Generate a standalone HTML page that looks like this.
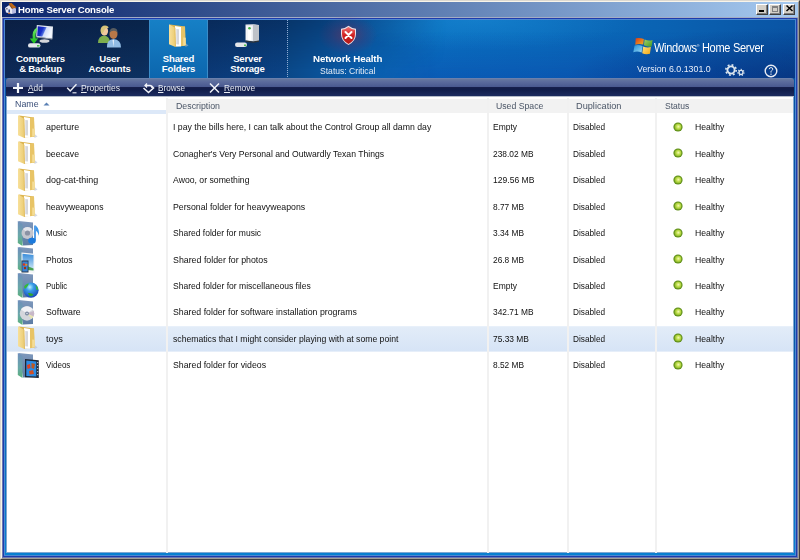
<!DOCTYPE html>
<html><head><meta charset="utf-8"><style>
*{margin:0;padding:0;box-sizing:border-box}
html,body{width:800px;height:560px;overflow:hidden;background:#D4D0C8;font-family:"Liberation Sans",sans-serif}
.a{position:absolute}
#frame{left:0;top:0;width:800px;height:560px;border-top:1px solid #DCD8D0;border-left:1px solid #DCD8D0;border-right:1px solid #404040;border-bottom:1px solid #404040}
#frame2{left:1px;top:1px;width:798px;height:558px;border-top:1px solid #F8F4EA;border-left:1px solid #F8F4EA;border-right:1px solid #A09C94;border-bottom:1px solid #A09C94}
#title{left:2px;top:2px;width:796px;height:15px;background:linear-gradient(to right,#0A246A,#A6CAF0)}
#ttext{left:18px;top:4.5px;color:#fff;font-weight:bold;font-size:10px;letter-spacing:-0.3px;white-space:nowrap}
.tb{top:4px;width:12px;height:11px;background:#D4D0C8;border-top:1px solid #fff;border-left:1px solid #fff;border-right:1px solid #404040;border-bottom:1px solid #404040;box-shadow:inset -1px -1px 0 #808080}
#titlegap{left:2px;top:17px;width:796px;height:1px;background:#A4ACC4}
#mix{left:2px;top:18px;width:796px;height:540px;background:#6A78B0}
#border{left:3px;top:18px;width:794px;height:539px;background:#1E3CAC}
#border2{left:4px;top:19px;width:792px;height:537px;background:#4C88D0}
#border3{left:5px;top:20px;width:790px;height:535px;background:linear-gradient(to bottom,#0850A0,#0858A8 60%,#0880D0)}
#cedge{left:6px;top:97px;width:788px;height:456px;background:#7EA6D2}
#header{left:5px;top:20px;width:282px;height:58px;background:linear-gradient(to bottom,rgba(0,0,12,.27),rgba(0,0,0,0)),linear-gradient(to right,#0E2A58 0,#0C3060 135px,#0B3A78 205px,#0A4488 282px)}
#headerR{left:287px;top:20px;width:508px;height:58px;background:radial-gradient(ellipse 230px 55px at 508px 62px,rgba(0,10,70,.38),rgba(0,0,0,0)),radial-gradient(ellipse 160px 30px at 190px 0px,rgba(40,160,230,.30),rgba(0,0,0,0)),linear-gradient(to right,#0A4888 0,#0A5CAA 70px,#0A70C0 150px,#0A6CBC 250px,#0A62B2 380px,#0A54A4 508px)}
#hrTop{left:287px;top:20px;width:160px;height:58px;background:linear-gradient(to bottom,rgba(0,0,20,.25),rgba(0,0,0,0) 85%);-webkit-mask-image:linear-gradient(to right,#000 0,#000 40px,rgba(0,0,0,0) 160px)}
#hrBot{left:370px;top:20px;width:425px;height:58px;background:linear-gradient(to bottom,rgba(10,30,150,0) 20%,rgba(10,30,150,.25));-webkit-mask-image:linear-gradient(to right,rgba(0,0,0,0) 0,#000 60px,#000 300px,rgba(0,0,0,.3) 425px)}
#sel{left:149px;top:20px;width:59px;height:58px;background:linear-gradient(to bottom,#1680C6,#0C66AE);border-left:1px solid #3A8CC8;border-right:1px solid #3A8CC8}
#sep{left:287px;top:20px;width:1px;height:58px;background:repeating-linear-gradient(to bottom,#90ACD4 0 1px,rgba(0,0,0,0) 1px 2px)}
.tab{top:53.6px;width:69px;color:#fff;font-weight:bold;font-size:9.6px;letter-spacing:-0.2px;line-height:10px;text-align:center;white-space:nowrap}
#toolbar{left:6px;top:78px;width:788px;height:18px;border-radius:3px 3px 0 0;background:linear-gradient(to bottom,#7088B8 0px,#66789F 1px,#5A6A9C 4px,#4A5A90 8.5px,#161F4C 9.5px,#101C48 11px,#1C2C60 18px)}
#tbline{left:6px;top:96px;width:788px;height:1px;background:#B4BCC8}
.tbi{top:82px;color:#E8ECF4;font-size:9.3px;letter-spacing:-0.3px;white-space:nowrap}
#content{left:7px;top:97px;width:786px;height:455px;background:#fff}
.hcell{top:98.6px;height:14.6px;background:#F2F2F2}
.htext{top:101px;color:#4A5566;font-size:9.3px;letter-spacing:-0.25px;white-space:nowrap}
.vdiv{top:98px;width:2px;height:455px;background:#F1F1F1}
.cell{color:#101010;font-size:9.3px;letter-spacing:-0.25px;white-space:nowrap}
</style></head><body>
<div class="a" id="frame"></div><div class="a" id="frame2"></div>
<div class="a" id="title"></div>
<div class="a" id="ttl" style="left:18.00px;top:3.10px;line-height:14px;font-size:9.8px;font-weight:bold;letter-spacing:-0.2px;color:#fff;white-space:nowrap;transform:scaleX(0.9817);transform-origin:0 0;">Home Server Console</div>
<div class="a tb" style="left:756px"></div>
<div class="a tb" style="left:769px"></div>
<div class="a tb" style="left:783px"></div>
<svg class="a" style="left:4px;top:3px" width="13" height="12" viewBox="0 0 13 12">
<path d="M1 5 L6 1.5 L8 4 L8 11 L2 9.5 Z" fill="#E8E8F4"/>
<path d="M8 4 L12 5.5 L12 10 L8 11 Z" fill="#B8BCE0"/>
<path d="M4.5 0.5 L7.5 0 L12.5 4.5 L9 5.5 Z" fill="#C06A18"/>
<path d="M6 1.5 L9 5.5 L8 6 L5 2 Z" fill="#8A4810"/>
<rect x="4.5" y="6.5" width="1.4" height="3" fill="#1A3A8A"/>
<rect x="2.3" y="5.2" width="1.2" height="1.2" fill="#303040"/>
<rect x="4.2" y="9.8" width="1.6" height="1.2" fill="#D07020"/>
</svg>
<div class="a" style="left:759px;top:9.5px;width:5px;height:2px;background:#000"></div>
<div class="a" style="left:772px;top:6px;width:6px;height:6px;border:1px solid #808080;border-top-width:2px"></div>
<svg class="a" style="left:785px;top:4px" width="9" height="8" viewBox="0 0 9 8"><path d="M1.5 1.5 L7.5 7 M7.5 1.5 L1.5 7" stroke="#000" stroke-width="1.5"/></svg>
<div class="a" id="titlegap"></div><div class="a" id="mix"></div><div class="a" id="border"></div><div class="a" id="border2"></div><div class="a" id="border3"></div>
<div class="a" id="header"></div><div class="a" id="headerR"></div><div class="a" id="hrTop"></div><div class="a" id="hrBot"></div><div class="a" id="sel"></div><div class="a" id="sep"></div>
<div class="a tab" style="left:6px">Computers<br>&amp; Backup</div>
<div class="a tab" style="left:75px">User<br>Accounts</div>
<div class="a tab" style="left:144px">Shared<br>Folders</div>
<div class="a tab" style="left:213px">Server<br>Storage</div>
<div class="a" id="nh" style="left:313.00px;top:52.17px;line-height:14px;font-size:9.6px;font-weight:bold;letter-spacing:-0.1px;color:#fff;white-space:nowrap;transform:scaleX(1.0125);transform-origin:0 0;">Network Health</div>
<div class="a" id="nhs" style="left:320.45px;top:64.10px;line-height:14px;font-size:9.8px;letter-spacing:0px;color:#E4ECF6;white-space:nowrap;transform:scaleX(0.8763);transform-origin:0 0;">Status: Critical</div>
<div class="a" id="whs" style="left:654.22px;top:39.14px;line-height:14px;font-size:12px;letter-spacing:-0.3px;color:#fff;white-space:nowrap;transform:scaleX(0.9167);transform-origin:0 0;">Windows<span style="font-size:4px;vertical-align:5px">&#174;</span> Home Server</div>
<div class="a" id="ver" style="left:637.00px;top:62.10px;line-height:14px;font-size:9.8px;letter-spacing:0px;color:#E8EEF8;white-space:nowrap;transform:scaleX(0.9024);transform-origin:0 0;">Version 6.0.1301.0</div>
<svg class="a" style="left:27px;top:24px" width="28" height="25" viewBox="0 0 28 25">
<defs><linearGradient id="scr" x1="0" y1="0" x2="1" y2=".35"><stop offset="0" stop-color="#0A18B0"/><stop offset=".4" stop-color="#1830C8"/><stop offset=".55" stop-color="#5070E0"/><stop offset=".62" stop-color="#D0DCFA"/><stop offset="1" stop-color="#F4F8FF"/></linearGradient>
<linearGradient id="grn" x1="0" y1="0" x2="0" y2="1"><stop offset="0" stop-color="#70E868"/><stop offset="1" stop-color="#18B818"/></linearGradient></defs>
<path d="M9.8 1 L26 2.6 L25.4 14.8 L9.2 12.8 Z" fill="#E4E8EE"/>
<path d="M10.8 2.3 L25 3.7 L24.5 13.7 L10.2 11.9 Z" fill="url(#scr)"/>
<path d="M9.2 12.8 L25.4 14.8 L25.2 15.6 L9.6 13.6 Z" fill="#A8ACB4"/>
<ellipse cx="17.5" cy="17" rx="5" ry="1.8" fill="#D4D6DA"/>
<path d="M10 3.5 Q4.5 6.5 5.8 14.5 L2.8 14.5 L7 20 L11.2 14.2 L8.6 14.4 Q8 9 10.2 6 Z" fill="url(#grn)"/>
<rect x="1" y="19.2" width="12.5" height="4.4" rx="2.2" fill="#E6E8EC"/>
<rect x="10" y="21" width="2.5" height="1.6" fill="#50C050"/>
</svg>
<svg class="a" style="left:96px;top:24px" width="28" height="25" viewBox="0 0 28 25">
<path d="M2 19 Q2 12 8 11.5 Q14 12 14 19 Z" fill="#7EAE4E"/>
<ellipse cx="8.5" cy="7" rx="3.6" ry="4.6" fill="#F0C8A0"/>
<path d="M4.5 6 Q5 1.5 9 1.5 Q12.5 1.8 12.5 4 Q10 3.5 9 5 Q8 8 5.5 10 Q4.5 8 4.5 6 Z" fill="#D8C47A"/>
<path d="M11 23.5 Q10.5 15.5 17.5 15 Q25 15.5 25 23.5 Z" fill="#92BCE4"/>
<path d="M16.5 16 L18 16 L17.5 23 Z" fill="#E8F0F8"/>
<ellipse cx="17.5" cy="10" rx="4" ry="5" fill="#B87848"/>
<path d="M13.5 9 Q13.5 4 17.8 4 Q21.8 4.2 21.5 9 Q20.5 6.5 17.5 6.8 Q15 6.8 13.5 9 Z" fill="#585C60"/>
</svg>
<svg class="a" style="left:168px;top:24px" width="22" height="25" viewBox="0 0 22 25">
<defs><linearGradient id="fyhdr" x1="0" y1="0" x2="1" y2="0"><stop offset="0" stop-color="#F8E09A"/><stop offset="1" stop-color="#EACB72"/></linearGradient></defs>
<path d="M17 18.5 L20.5 21.5 L17.5 23 Z" fill="#B0B8CC" opacity=".55"/>
<path d="M2 0.5 L17 2.5 L17.5 21.5 L7 22.5 Z" fill="#DDB550"/>
<path d="M7 2 L13 3 L13 22.5 L7.5 22.5 Z" fill="#FFFFFF"/>
<path d="M8.3 5 L11 5.3 L11 20.5 L8.3 20.3 Z" fill="#B4B6C0" opacity=".55"/>
<path d="M13 2.8 L17 2.5 L17.5 21.5 L13 22.3 Z" fill="#E8C466"/>
<path d="M15.2 13.5 L17.8 13.8 L17.8 21 L15.2 21.8 Z" fill="#F4DC96"/>
<path d="M1 0.3 L7 3.8 L7.5 23 L1 20.3 Z" fill="url(#fyhdr)"/>
<path d="M7 3.8 L7.5 23" stroke="#D8AE48" stroke-width=".6"/>
</svg>
<svg class="a" style="left:234px;top:24px" width="27" height="24" viewBox="0 0 27 24">
<path d="M11.5 0.5 L19 0.2 L25 1 L25 16.5 L19 17.5 L11.5 16.5 Z" fill="#E4E6EA"/>
<path d="M19 0.8 L25 1.2 L25 16.5 L19 17.5 Z" fill="#BEC2C8"/>
<path d="M12 2 L18.5 1.8 L18.5 16.5 L12 15.8 Z" fill="#F4F6F8"/>
<rect x="14" y="4" width="3" height="12" fill="#FFFFFF"/>
<circle cx="15.5" cy="4.3" r="1.3" fill="#40B040"/>
<path d="M11.5 16.5 L19 17.5 L25 16.5 L25 17.8 L19 18.8 L11.5 17.8 Z" fill="#303438"/>
<rect x="1" y="18.5" width="12" height="4.5" rx="2.2" fill="#E4E6EA"/>
<rect x="10" y="20.5" width="2.2" height="1.6" fill="#50C050"/>
</svg>
<div class="a" style="left:318px;top:15px;width:60px;height:40px;background:radial-gradient(ellipse at center,rgba(150,40,70,.45) 0,rgba(120,40,90,.2) 40%,rgba(0,0,0,0) 70%)"></div>
<svg class="a" style="left:340px;top:25px" width="17" height="21" viewBox="0 0 17 21">
<defs><linearGradient id="shr" x1="0" y1="0" x2="0" y2="1"><stop offset="0" stop-color="#F07070"/><stop offset=".5" stop-color="#D02020"/><stop offset="1" stop-color="#B01818"/></linearGradient></defs>
<path d="M8.5 0.8 Q12 3.5 16 3.8 L16 9 Q16 16 8.5 20 Q1 16 1 9 L1 3.8 Q5 3.5 8.5 0.8 Z" fill="#E8E0E8"/>
<path d="M8.5 2 Q11.8 4.5 15 4.8 L15 9 Q15 15.5 8.5 19 Q2 15.5 2 9 L2 4.8 Q5.2 4.5 8.5 2 Z" fill="url(#shr)"/>
<path d="M5.5 7 L11.5 13 M11.5 7 L5.5 13" stroke="#FFFFFF" stroke-width="2" stroke-linecap="round"/>
</svg>
<svg class="a" style="left:633px;top:37px" width="21" height="18" viewBox="0 0 21 18">
<defs><linearGradient id="wfr" x1="0" y1="0" x2="1" y2="1"><stop offset="0" stop-color="#D83A18"/><stop offset="1" stop-color="#F4B020"/></linearGradient>
<linearGradient id="wfg" x1="0" y1="0" x2="1" y2="1"><stop offset="0" stop-color="#A8D060"/><stop offset="1" stop-color="#3C9A28"/></linearGradient>
<linearGradient id="wfb" x1="0" y1="0" x2="1" y2="1"><stop offset="0" stop-color="#2090D8"/><stop offset="1" stop-color="#9AD8F4"/></linearGradient>
<linearGradient id="wfy" x1="0" y1="0" x2="1" y2="1"><stop offset="0" stop-color="#FCE080"/><stop offset="1" stop-color="#F4A810"/></linearGradient></defs>
<path d="M2.7 1.3 Q6.5 0.3 10.9 2.1 L10.2 7.5 Q6 6.2 2.3 7.7 Z" fill="url(#wfr)"/>
<path d="M11.6 2.6 Q15.5 4.2 19.6 3 L18.6 9.4 Q14.8 10.2 10.9 8.3 Z" fill="url(#wfg)"/>
<path d="M1.6 8.4 Q5.5 7.2 9.6 9 L8.6 15.5 Q4.5 13.8 0.3 15.2 Z" fill="url(#wfb)"/>
<path d="M10.2 9.5 Q14 11.2 17.9 10.1 L16.9 16.8 Q12.8 17.8 9.2 16.3 Z" fill="url(#wfy)"/>
</svg>
<svg class="a" style="left:723px;top:62px" width="24" height="16" viewBox="0 0 24 16">
<g fill="none" stroke="#DCE6EE">
<circle cx="8" cy="8" r="3.6" stroke-width="1.9"/>
<circle cx="8" cy="8" r="5.2" stroke-width="1.6" stroke-dasharray="1.9 2.18"/>
<circle cx="18" cy="10.4" r="2" stroke-width="1.4"/>
<circle cx="18" cy="10.4" r="3.1" stroke-width="1.1" stroke-dasharray="1.2 1.58"/>
</g></svg>
<svg class="a" style="left:764px;top:64px" width="14" height="14" viewBox="0 0 14 14">
<circle cx="7" cy="7" r="5.8" fill="none" stroke="#E8ECF4" stroke-width="1.4"/>
<path d="M5.2 5.2 Q5.2 3.6 7 3.6 Q8.8 3.6 8.8 5.1 Q8.8 6.2 7.4 6.9 L7 7.5 L7 8.6" fill="none" stroke="#E8ECF4" stroke-width="1"/>
<rect x="6.4" y="9.6" width="1.2" height="1.2" fill="#E8ECF4"/>
</svg>
<div class="a" id="toolbar"></div><div class="a" id="tbline"></div>
<svg class="a" style="left:12px;top:82px" width="12" height="12" viewBox="0 0 12 12"><path d="M6 1 L6 11 M1 6 L11 6" stroke="#F4F6FA" stroke-width="2.2"/></svg>
<svg class="a" style="left:66px;top:83px" width="12" height="11" viewBox="0 0 12 11"><path d="M1.2 4.8 L4.2 8 L10.5 1.2" fill="none" stroke="#F0F2F8" stroke-width="1.4"/><path d="M6.5 9.8 L10.5 9.8" stroke="#F0F2F8" stroke-width="1.1"/></svg>
<svg class="a" style="left:142px;top:82px" width="13" height="12" viewBox="0 0 13 12"><path d="M1.5 6 L6.5 10.5 L11.5 6 L9.5 4" fill="none" stroke="#F0F2F8" stroke-width="1.6"/><path d="M5 1.5 L3 3.5 L5 5.5 M3 3.5 L8 3.5 Q10 3.5 10 6" fill="none" stroke="#F0F2F8" stroke-width="1.3"/></svg>
<svg class="a" style="left:209px;top:82px" width="11" height="12" viewBox="0 0 11 12"><path d="M1 1.5 L10 10.5 M10 1.5 L1 10.5" stroke="#F0F2F8" stroke-width="1.5"/></svg>
<div class="a" id="tb1" style="left:28.00px;top:81.24px;line-height:14px;font-size:9.4px;letter-spacing:0px;color:#E8ECF4;white-space:nowrap;transform:scaleX(0.8824);transform-origin:0 0;"><u>A</u>dd</div>
<div class="a" id="tb2" style="left:81.10px;top:81.24px;line-height:14px;font-size:9.4px;letter-spacing:0px;color:#E8ECF4;white-space:nowrap;transform:scaleX(0.9122);transform-origin:0 0;"><u>P</u>roperties</div>
<div class="a" id="tb3" style="left:158.00px;top:81.24px;line-height:14px;font-size:9.4px;letter-spacing:0px;color:#E8ECF4;white-space:nowrap;transform:scaleX(0.8682);transform-origin:0 0;"><u>B</u>rowse</div>
<div class="a" id="tb4" style="left:223.93px;top:81.24px;line-height:14px;font-size:9.4px;letter-spacing:0px;color:#E8ECF4;white-space:nowrap;transform:scaleX(0.8898);transform-origin:0 0;"><u>R</u>emove</div>
<div class="a" id="cedge"></div><div class="a" id="content"></div>
<div class="a" style="left:7px;top:97px;width:160px;height:13px;background:#fff"></div>
<div class="a" style="left:7px;top:110px;width:160px;height:4px;background:#DCE8F8"></div>
<div class="a hcell" style="left:168px;width:625px"></div>
<div class="a" style="left:7px;top:326px;width:786px;height:26px;background:linear-gradient(to bottom,#E2ECF8,#D6E4F6);border-top:1px solid #E8F0FA;border-bottom:1px solid #E6EEF9"></div>
<div class="a vdiv" style="left:166px"></div>
<div class="a vdiv" style="left:487px"></div>
<div class="a vdiv" style="left:567px"></div>
<div class="a vdiv" style="left:655px"></div>
<div class="a" id="hn" style="left:14.83px;top:97.17px;line-height:14px;font-size:9.6px;letter-spacing:0.0px;color:#3A4E78;white-space:nowrap;transform:scaleX(0.9217);transform-origin:0 0;">Name</div>
<svg class="a" style="left:43px;top:102px" width="7" height="4" viewBox="0 0 7 4"><path d="M0.5 3.5 L3.5 0.5 L6.5 3.5 Z" fill="#5A80B4"/></svg>
<div class="a" id="hd" style="left:176.00px;top:99.17px;line-height:14px;font-size:9.6px;letter-spacing:0.0px;color:#4A5566;white-space:nowrap;transform:scaleX(0.9167);transform-origin:0 0;">Description</div>
<div class="a" id="hu" style="left:496.00px;top:99.17px;line-height:14px;font-size:9.6px;letter-spacing:0.0px;color:#4A5566;white-space:nowrap;transform:scaleX(0.9059);transform-origin:0 0;">Used Space</div>
<div class="a" id="hp" style="left:576.02px;top:99.17px;line-height:14px;font-size:9.6px;letter-spacing:0.0px;color:#4A5566;white-space:nowrap;transform:scaleX(0.9574);transform-origin:0 0;">Duplication</div>
<div class="a" id="hs" style="left:665.00px;top:99.17px;line-height:14px;font-size:9.6px;letter-spacing:0.0px;color:#4A5566;white-space:nowrap;transform:scaleX(0.8930);transform-origin:0 0;">Status</div>
<svg class="a" style="left:17px;top:115px" width="22" height="25" viewBox="0 0 22 25">
<defs><linearGradient id="fy0" x1="0" y1="0" x2="1" y2="0"><stop offset="0" stop-color="#F8E09A"/><stop offset="1" stop-color="#EACB72"/></linearGradient></defs>
<path d="M17 18.5 L20.5 21.5 L17.5 23 Z" fill="#B0B8CC" opacity=".55"/>
<path d="M2 0.5 L17 2.5 L17.5 21.5 L7 22.5 Z" fill="#DDB550"/>
<path d="M7 2 L13 3 L13 22.5 L7.5 22.5 Z" fill="#FFFFFF"/>
<path d="M8.3 5 L11 5.3 L11 20.5 L8.3 20.3 Z" fill="#B4B6C0" opacity=".55"/>
<path d="M13 2.8 L17 2.5 L17.5 21.5 L13 22.3 Z" fill="#E8C466"/>
<path d="M15.2 13.5 L17.8 13.8 L17.8 21 L15.2 21.8 Z" fill="#F4DC96"/>
<path d="M1 0.3 L7 3.8 L7.5 23 L1 20.3 Z" fill="url(#fy0)"/>
<path d="M7 3.8 L7.5 23" stroke="#D8AE48" stroke-width=".6"/>
</svg>
<div class="a" id="n0" style="left:45.78px;top:120.00px;line-height:14px;font-size:9.8px;letter-spacing:0.0px;color:#101010;white-space:nowrap;transform:scaleX(0.9082);transform-origin:0 0;">aperture</div>
<div class="a" id="d0" style="left:172.83px;top:120.00px;line-height:14px;font-size:9.8px;letter-spacing:0.0px;color:#101010;white-space:nowrap;transform:scaleX(0.8897);transform-origin:0 0;">I pay the bills here, I can talk about the Control Group all damn day</div>
<div class="a" id="u0" style="left:493.13px;top:120.00px;line-height:14px;font-size:9.8px;letter-spacing:0.0px;color:#101010;white-space:nowrap;transform:scaleX(0.8636);transform-origin:0 0;">Empty</div>
<div class="a" id="p0" style="left:573.46px;top:120.00px;line-height:14px;font-size:9.8px;letter-spacing:0.0px;color:#101010;white-space:nowrap;transform:scaleX(0.8421);transform-origin:0 0;">Disabled</div>
<svg class="a" style="left:673px;top:122px" width="10" height="10" viewBox="0 0 10 10">
<defs><radialGradient id="gd122" cx=".55" cy=".45" r=".6"><stop offset="0" stop-color="#F4FAB0"/><stop offset=".5" stop-color="#BCDC48"/><stop offset="1" stop-color="#7CAA22"/></radialGradient></defs>
<circle cx="5" cy="5" r="4.6" fill="#5E8E18"/><circle cx="5" cy="5" r="3.5" fill="url(#gd122)"/></svg>
<div class="a" id="h0" style="left:694.79px;top:120.00px;line-height:14px;font-size:9.8px;letter-spacing:0.0px;color:#101010;white-space:nowrap;transform:scaleX(0.8857);transform-origin:0 0;">Healthy</div>
<svg class="a" style="left:17px;top:141px" width="22" height="25" viewBox="0 0 22 25">
<defs><linearGradient id="fy1" x1="0" y1="0" x2="1" y2="0"><stop offset="0" stop-color="#F8E09A"/><stop offset="1" stop-color="#EACB72"/></linearGradient></defs>
<path d="M17 18.5 L20.5 21.5 L17.5 23 Z" fill="#B0B8CC" opacity=".55"/>
<path d="M2 0.5 L17 2.5 L17.5 21.5 L7 22.5 Z" fill="#DDB550"/>
<path d="M7 2 L13 3 L13 22.5 L7.5 22.5 Z" fill="#FFFFFF"/>
<path d="M8.3 5 L11 5.3 L11 20.5 L8.3 20.3 Z" fill="#B4B6C0" opacity=".55"/>
<path d="M13 2.8 L17 2.5 L17.5 21.5 L13 22.3 Z" fill="#E8C466"/>
<path d="M15.2 13.5 L17.8 13.8 L17.8 21 L15.2 21.8 Z" fill="#F4DC96"/>
<path d="M1 0.3 L7 3.8 L7.5 23 L1 20.3 Z" fill="url(#fy1)"/>
<path d="M7 3.8 L7.5 23" stroke="#D8AE48" stroke-width=".6"/>
</svg>
<div class="a" id="n1" style="left:45.78px;top:147.00px;line-height:14px;font-size:9.8px;letter-spacing:0.0px;color:#101010;white-space:nowrap;transform:scaleX(0.8919);transform-origin:0 0;">beecave</div>
<div class="a" id="d1" style="left:172.84px;top:147.00px;line-height:14px;font-size:9.8px;letter-spacing:0.0px;color:#101010;white-space:nowrap;transform:scaleX(0.8792);transform-origin:0 0;">Conagher&#39;s Very Personal and Outwardly Texan Things</div>
<div class="a" id="u1" style="left:493.16px;top:147.00px;line-height:14px;font-size:9.8px;letter-spacing:0.0px;color:#101010;white-space:nowrap;transform:scaleX(0.8542);transform-origin:0 0;">238.02 MB</div>
<div class="a" id="p1" style="left:573.46px;top:147.00px;line-height:14px;font-size:9.8px;letter-spacing:0.0px;color:#101010;white-space:nowrap;transform:scaleX(0.8421);transform-origin:0 0;">Disabled</div>
<svg class="a" style="left:673px;top:148px" width="10" height="10" viewBox="0 0 10 10">
<defs><radialGradient id="gd148" cx=".55" cy=".45" r=".6"><stop offset="0" stop-color="#F4FAB0"/><stop offset=".5" stop-color="#BCDC48"/><stop offset="1" stop-color="#7CAA22"/></radialGradient></defs>
<circle cx="5" cy="5" r="4.6" fill="#5E8E18"/><circle cx="5" cy="5" r="3.5" fill="url(#gd148)"/></svg>
<div class="a" id="h1" style="left:694.79px;top:147.00px;line-height:14px;font-size:9.8px;letter-spacing:0.0px;color:#101010;white-space:nowrap;transform:scaleX(0.8857);transform-origin:0 0;">Healthy</div>
<svg class="a" style="left:17px;top:168px" width="22" height="25" viewBox="0 0 22 25">
<defs><linearGradient id="fy2" x1="0" y1="0" x2="1" y2="0"><stop offset="0" stop-color="#F8E09A"/><stop offset="1" stop-color="#EACB72"/></linearGradient></defs>
<path d="M17 18.5 L20.5 21.5 L17.5 23 Z" fill="#B0B8CC" opacity=".55"/>
<path d="M2 0.5 L17 2.5 L17.5 21.5 L7 22.5 Z" fill="#DDB550"/>
<path d="M7 2 L13 3 L13 22.5 L7.5 22.5 Z" fill="#FFFFFF"/>
<path d="M8.3 5 L11 5.3 L11 20.5 L8.3 20.3 Z" fill="#B4B6C0" opacity=".55"/>
<path d="M13 2.8 L17 2.5 L17.5 21.5 L13 22.3 Z" fill="#E8C466"/>
<path d="M15.2 13.5 L17.8 13.8 L17.8 21 L15.2 21.8 Z" fill="#F4DC96"/>
<path d="M1 0.3 L7 3.8 L7.5 23 L1 20.3 Z" fill="url(#fy2)"/>
<path d="M7 3.8 L7.5 23" stroke="#D8AE48" stroke-width=".6"/>
</svg>
<div class="a" id="n2" style="left:45.78px;top:173.00px;line-height:14px;font-size:9.8px;letter-spacing:0.0px;color:#101010;white-space:nowrap;transform:scaleX(0.9123);transform-origin:0 0;">dog-cat-thing</div>
<div class="a" id="d2" style="left:172.72px;top:173.00px;line-height:14px;font-size:9.8px;letter-spacing:0.0px;color:#101010;white-space:nowrap;transform:scaleX(0.8851);transform-origin:0 0;">Awoo, or something</div>
<div class="a" id="u2" style="left:493.30px;top:173.00px;line-height:14px;font-size:9.8px;letter-spacing:0.0px;color:#101010;white-space:nowrap;transform:scaleX(0.8729);transform-origin:0 0;">129.56 MB</div>
<div class="a" id="p2" style="left:573.46px;top:173.00px;line-height:14px;font-size:9.8px;letter-spacing:0.0px;color:#101010;white-space:nowrap;transform:scaleX(0.8421);transform-origin:0 0;">Disabled</div>
<svg class="a" style="left:673px;top:175px" width="10" height="10" viewBox="0 0 10 10">
<defs><radialGradient id="gd175" cx=".55" cy=".45" r=".6"><stop offset="0" stop-color="#F4FAB0"/><stop offset=".5" stop-color="#BCDC48"/><stop offset="1" stop-color="#7CAA22"/></radialGradient></defs>
<circle cx="5" cy="5" r="4.6" fill="#5E8E18"/><circle cx="5" cy="5" r="3.5" fill="url(#gd175)"/></svg>
<div class="a" id="h2" style="left:694.79px;top:173.00px;line-height:14px;font-size:9.8px;letter-spacing:0.0px;color:#101010;white-space:nowrap;transform:scaleX(0.8857);transform-origin:0 0;">Healthy</div>
<svg class="a" style="left:17px;top:194px" width="22" height="25" viewBox="0 0 22 25">
<defs><linearGradient id="fy3" x1="0" y1="0" x2="1" y2="0"><stop offset="0" stop-color="#F8E09A"/><stop offset="1" stop-color="#EACB72"/></linearGradient></defs>
<path d="M17 18.5 L20.5 21.5 L17.5 23 Z" fill="#B0B8CC" opacity=".55"/>
<path d="M2 0.5 L17 2.5 L17.5 21.5 L7 22.5 Z" fill="#DDB550"/>
<path d="M7 2 L13 3 L13 22.5 L7.5 22.5 Z" fill="#FFFFFF"/>
<path d="M8.3 5 L11 5.3 L11 20.5 L8.3 20.3 Z" fill="#B4B6C0" opacity=".55"/>
<path d="M13 2.8 L17 2.5 L17.5 21.5 L13 22.3 Z" fill="#E8C466"/>
<path d="M15.2 13.5 L17.8 13.8 L17.8 21 L15.2 21.8 Z" fill="#F4DC96"/>
<path d="M1 0.3 L7 3.8 L7.5 23 L1 20.3 Z" fill="url(#fy3)"/>
<path d="M7 3.8 L7.5 23" stroke="#D8AE48" stroke-width=".6"/>
</svg>
<div class="a" id="n3" style="left:45.78px;top:200.00px;line-height:14px;font-size:9.8px;letter-spacing:0.0px;color:#101010;white-space:nowrap;transform:scaleX(0.8788);transform-origin:0 0;">heavyweapons</div>
<div class="a" id="d3" style="left:172.83px;top:200.00px;line-height:14px;font-size:9.8px;letter-spacing:0.0px;color:#101010;white-space:nowrap;transform:scaleX(0.8919);transform-origin:0 0;">Personal folder for heavyweapons</div>
<div class="a" id="u3" style="left:493.15px;top:200.00px;line-height:14px;font-size:9.8px;letter-spacing:0.0px;color:#101010;white-space:nowrap;transform:scaleX(0.8516);transform-origin:0 0;">8.77 MB</div>
<div class="a" id="p3" style="left:573.46px;top:200.00px;line-height:14px;font-size:9.8px;letter-spacing:0.0px;color:#101010;white-space:nowrap;transform:scaleX(0.8421);transform-origin:0 0;">Disabled</div>
<svg class="a" style="left:673px;top:201px" width="10" height="10" viewBox="0 0 10 10">
<defs><radialGradient id="gd201" cx=".55" cy=".45" r=".6"><stop offset="0" stop-color="#F4FAB0"/><stop offset=".5" stop-color="#BCDC48"/><stop offset="1" stop-color="#7CAA22"/></radialGradient></defs>
<circle cx="5" cy="5" r="4.6" fill="#5E8E18"/><circle cx="5" cy="5" r="3.5" fill="url(#gd201)"/></svg>
<div class="a" id="h3" style="left:694.79px;top:200.00px;line-height:14px;font-size:9.8px;letter-spacing:0.0px;color:#101010;white-space:nowrap;transform:scaleX(0.8857);transform-origin:0 0;">Healthy</div>
<svg class="a" style="left:17px;top:221px" width="24" height="26" viewBox="0 0 24 26"><defs><linearGradient id="sb4" x1="0" y1="0" x2="0" y2="1"><stop offset="0" stop-color="#7E98BC"/><stop offset="1" stop-color="#5C7CA4"/></linearGradient>
<linearGradient id="sf4" x1="0" y1="0" x2="0" y2="1"><stop offset="0" stop-color="#6E8EBC"/><stop offset=".6" stop-color="#6AA8A8"/><stop offset="1" stop-color="#58B078"/></linearGradient></defs>
<path d="M1.5 0 L16 1.5 L16 24 L6 24.5 Z" fill="url(#sb4)"/>
<path d="M0.8 0 L5.5 3 L5.5 25 L0.8 22 Z" fill="url(#sf4)"/><circle cx="10.5" cy="12" r="6" fill="#C4C6CE"/><path d="M6 8 A6 6 0 0 1 15 8 L10.5 12 Z" fill="#E4E6EC"/><circle cx="10.5" cy="12" r="2.6" fill="#8A92A4"/>
<path d="M17.2 4.5 L18.8 4.5 L18.8 19.5 L17.2 19.5 Z" fill="#2A86E2"/><path d="M18.8 4.5 Q23 8.5 21.8 15 Q21 11 18.8 9.5 Z" fill="#3A96EA"/><ellipse cx="15" cy="19.8" rx="3.8" ry="3" fill="#1C7ADC"/></svg>
<div class="a" id="n4" style="left:45.76px;top:226.00px;line-height:14px;font-size:9.8px;letter-spacing:0.0px;color:#101010;white-space:nowrap;transform:scaleX(0.8163);transform-origin:0 0;">Music</div>
<div class="a" id="d4" style="left:172.83px;top:226.00px;line-height:14px;font-size:9.8px;letter-spacing:0.0px;color:#101010;white-space:nowrap;transform:scaleX(0.8694);transform-origin:0 0;">Shared folder for music</div>
<div class="a" id="u4" style="left:493.15px;top:226.00px;line-height:14px;font-size:9.8px;letter-spacing:0.0px;color:#101010;white-space:nowrap;transform:scaleX(0.8516);transform-origin:0 0;">3.34 MB</div>
<div class="a" id="p4" style="left:573.46px;top:226.00px;line-height:14px;font-size:9.8px;letter-spacing:0.0px;color:#101010;white-space:nowrap;transform:scaleX(0.8421);transform-origin:0 0;">Disabled</div>
<svg class="a" style="left:673px;top:228px" width="10" height="10" viewBox="0 0 10 10">
<defs><radialGradient id="gd228" cx=".55" cy=".45" r=".6"><stop offset="0" stop-color="#F4FAB0"/><stop offset=".5" stop-color="#BCDC48"/><stop offset="1" stop-color="#7CAA22"/></radialGradient></defs>
<circle cx="5" cy="5" r="4.6" fill="#5E8E18"/><circle cx="5" cy="5" r="3.5" fill="url(#gd228)"/></svg>
<div class="a" id="h4" style="left:694.79px;top:226.00px;line-height:14px;font-size:9.8px;letter-spacing:0.0px;color:#101010;white-space:nowrap;transform:scaleX(0.8857);transform-origin:0 0;">Healthy</div>
<svg class="a" style="left:17px;top:247px" width="24" height="26" viewBox="0 0 24 26"><defs><linearGradient id="sb5" x1="0" y1="0" x2="0" y2="1"><stop offset="0" stop-color="#7E98BC"/><stop offset="1" stop-color="#5C7CA4"/></linearGradient>
<linearGradient id="sf5" x1="0" y1="0" x2="0" y2="1"><stop offset="0" stop-color="#6E8EBC"/><stop offset=".6" stop-color="#6AA8A8"/><stop offset="1" stop-color="#58B078"/></linearGradient></defs>
<path d="M1.5 0 L16 1.5 L16 24 L6 24.5 Z" fill="url(#sb5)"/>
<path d="M0.8 0 L5.5 3 L5.5 25 L0.8 22 Z" fill="url(#sf5)"/><defs><linearGradient id="sky5" x1="0" y1="0" x2="0" y2="1"><stop offset="0" stop-color="#3A8EDC"/><stop offset="1" stop-color="#D8ECF8"/></linearGradient></defs>
<path d="M4.5 5.5 L17.5 6.8 L17.5 26 L4.5 25 Z" fill="#F4F6F8"/><path d="M5.5 6.8 L16.5 8 L16.5 23.5 L5.5 22.5 Z" fill="url(#sky5)"/><path d="M10 19 L16.5 21.5 L16.5 23.5 L10 23 Z" fill="#48A050"/>
<path d="M4.5 13.5 L11.5 13.5 L11.5 25.5 L4.5 25.5 Z" fill="#28384C"/><path d="M5.3 14.5 L10.7 14.5 L10.7 24.5 L5.3 24.5 Z" fill="#3C84D0"/><circle cx="7" cy="17.5" r="1.3" fill="#D83820"/><circle cx="9.3" cy="17.8" r="1.1" fill="#E89020"/><circle cx="8" cy="21" r="1.2" fill="#A03010"/></svg>
<div class="a" id="n5" style="left:45.77px;top:253.00px;line-height:14px;font-size:9.8px;letter-spacing:0.0px;color:#101010;white-space:nowrap;transform:scaleX(0.8681);transform-origin:0 0;">Photos</div>
<div class="a" id="d5" style="left:172.83px;top:253.00px;line-height:14px;font-size:9.8px;letter-spacing:0.0px;color:#101010;white-space:nowrap;transform:scaleX(0.9000);transform-origin:0 0;">Shared folder for photos</div>
<div class="a" id="u5" style="left:493.15px;top:253.00px;line-height:14px;font-size:9.8px;letter-spacing:0.0px;color:#101010;white-space:nowrap;transform:scaleX(0.8516);transform-origin:0 0;">26.8 MB</div>
<div class="a" id="p5" style="left:573.46px;top:253.00px;line-height:14px;font-size:9.8px;letter-spacing:0.0px;color:#101010;white-space:nowrap;transform:scaleX(0.8421);transform-origin:0 0;">Disabled</div>
<svg class="a" style="left:673px;top:254px" width="10" height="10" viewBox="0 0 10 10">
<defs><radialGradient id="gd254" cx=".55" cy=".45" r=".6"><stop offset="0" stop-color="#F4FAB0"/><stop offset=".5" stop-color="#BCDC48"/><stop offset="1" stop-color="#7CAA22"/></radialGradient></defs>
<circle cx="5" cy="5" r="4.6" fill="#5E8E18"/><circle cx="5" cy="5" r="3.5" fill="url(#gd254)"/></svg>
<div class="a" id="h5" style="left:694.79px;top:253.00px;line-height:14px;font-size:9.8px;letter-spacing:0.0px;color:#101010;white-space:nowrap;transform:scaleX(0.8857);transform-origin:0 0;">Healthy</div>
<svg class="a" style="left:17px;top:273px" width="24" height="26" viewBox="0 0 24 26"><defs><linearGradient id="sb6" x1="0" y1="0" x2="0" y2="1"><stop offset="0" stop-color="#7E98BC"/><stop offset="1" stop-color="#5C7CA4"/></linearGradient>
<linearGradient id="sf6" x1="0" y1="0" x2="0" y2="1"><stop offset="0" stop-color="#6E8EBC"/><stop offset=".6" stop-color="#6AA8A8"/><stop offset="1" stop-color="#58B078"/></linearGradient></defs>
<path d="M1.5 0 L16 1.5 L16 24 L6 24.5 Z" fill="url(#sb6)"/>
<path d="M0.8 0 L5.5 3 L5.5 25 L0.8 22 Z" fill="url(#sf6)"/><defs><radialGradient id="gl6" cx=".42" cy=".3" r=".7"><stop offset="0" stop-color="#B8F0FF"/><stop offset=".35" stop-color="#3A9EE8"/><stop offset="1" stop-color="#1848B8"/></radialGradient></defs>
<circle cx="14" cy="17.2" r="7.6" fill="url(#gl6)"/><path d="M7 14 Q8.5 10.5 12 10.5 Q11 13 9.5 14.5 L8 16 Z" fill="#38B838"/><path d="M11 20 Q14 19.5 16.5 21.5 Q15.5 23.5 12.5 23 Z" fill="#2CA82C"/><path d="M18.5 12 Q21 13.5 21.3 16.5 L19.5 17 Q19 14 18.5 12 Z" fill="#38B838"/></svg>
<div class="a" id="n6" style="left:45.78px;top:279.00px;line-height:14px;font-size:9.8px;letter-spacing:0.0px;color:#101010;white-space:nowrap;transform:scaleX(0.7967);transform-origin:0 0;">Public</div>
<div class="a" id="d6" style="left:172.84px;top:279.00px;line-height:14px;font-size:9.8px;letter-spacing:0.0px;color:#101010;white-space:nowrap;transform:scaleX(0.8722);transform-origin:0 0;">Shared folder for miscellaneous files</div>
<div class="a" id="u6" style="left:493.13px;top:279.00px;line-height:14px;font-size:9.8px;letter-spacing:0.0px;color:#101010;white-space:nowrap;transform:scaleX(0.8636);transform-origin:0 0;">Empty</div>
<div class="a" id="p6" style="left:573.46px;top:279.00px;line-height:14px;font-size:9.8px;letter-spacing:0.0px;color:#101010;white-space:nowrap;transform:scaleX(0.8421);transform-origin:0 0;">Disabled</div>
<svg class="a" style="left:673px;top:280px" width="10" height="10" viewBox="0 0 10 10">
<defs><radialGradient id="gd280" cx=".55" cy=".45" r=".6"><stop offset="0" stop-color="#F4FAB0"/><stop offset=".5" stop-color="#BCDC48"/><stop offset="1" stop-color="#7CAA22"/></radialGradient></defs>
<circle cx="5" cy="5" r="4.6" fill="#5E8E18"/><circle cx="5" cy="5" r="3.5" fill="url(#gd280)"/></svg>
<div class="a" id="h6" style="left:694.79px;top:279.00px;line-height:14px;font-size:9.8px;letter-spacing:0.0px;color:#101010;white-space:nowrap;transform:scaleX(0.8857);transform-origin:0 0;">Healthy</div>
<svg class="a" style="left:17px;top:300px" width="24" height="26" viewBox="0 0 24 26"><defs><linearGradient id="sb7" x1="0" y1="0" x2="0" y2="1"><stop offset="0" stop-color="#7E98BC"/><stop offset="1" stop-color="#5C7CA4"/></linearGradient>
<linearGradient id="sf7" x1="0" y1="0" x2="0" y2="1"><stop offset="0" stop-color="#6E8EBC"/><stop offset=".6" stop-color="#6AA8A8"/><stop offset="1" stop-color="#58B078"/></linearGradient></defs>
<path d="M1.5 0 L16 1.5 L16 24 L6 24.5 Z" fill="url(#sb7)"/>
<path d="M0.8 0 L5.5 3 L5.5 25 L0.8 22 Z" fill="url(#sf7)"/><circle cx="10" cy="13.5" r="7.2" fill="#D4D6DC"/><path d="M4 9.5 A7.2 7.2 0 0 1 16 9.5 L10 13.5 Z" fill="#F2F2F6"/><path d="M10 13.5 L16.8 11 A7.2 7.2 0 0 1 16.5 16.5 Z" fill="#C8B8C8"/><path d="M10 13.5 L16.5 16.5 A7.2 7.2 0 0 1 14.5 19 Z" fill="#E8E4B0"/><circle cx="10" cy="13.5" r="2" fill="#7A88A0"/><circle cx="10" cy="13.5" r=".8" fill="#E0E4EC"/></svg>
<div class="a" id="n7" style="left:45.78px;top:305.00px;line-height:14px;font-size:9.8px;letter-spacing:0.0px;color:#101010;white-space:nowrap;transform:scaleX(0.8974);transform-origin:0 0;">Software</div>
<div class="a" id="d7" style="left:172.83px;top:305.00px;line-height:14px;font-size:9.8px;letter-spacing:0.0px;color:#101010;white-space:nowrap;transform:scaleX(0.8932);transform-origin:0 0;">Shared folder for software installation programs</div>
<div class="a" id="u7" style="left:493.16px;top:305.00px;line-height:14px;font-size:9.8px;letter-spacing:0.0px;color:#101010;white-space:nowrap;transform:scaleX(0.8542);transform-origin:0 0;">342.71 MB</div>
<div class="a" id="p7" style="left:573.46px;top:305.00px;line-height:14px;font-size:9.8px;letter-spacing:0.0px;color:#101010;white-space:nowrap;transform:scaleX(0.8421);transform-origin:0 0;">Disabled</div>
<svg class="a" style="left:673px;top:307px" width="10" height="10" viewBox="0 0 10 10">
<defs><radialGradient id="gd307" cx=".55" cy=".45" r=".6"><stop offset="0" stop-color="#F4FAB0"/><stop offset=".5" stop-color="#BCDC48"/><stop offset="1" stop-color="#7CAA22"/></radialGradient></defs>
<circle cx="5" cy="5" r="4.6" fill="#5E8E18"/><circle cx="5" cy="5" r="3.5" fill="url(#gd307)"/></svg>
<div class="a" id="h7" style="left:694.79px;top:305.00px;line-height:14px;font-size:9.8px;letter-spacing:0.0px;color:#101010;white-space:nowrap;transform:scaleX(0.8857);transform-origin:0 0;">Healthy</div>
<svg class="a" style="left:17px;top:326px" width="22" height="25" viewBox="0 0 22 25">
<defs><linearGradient id="fy8" x1="0" y1="0" x2="1" y2="0"><stop offset="0" stop-color="#F8E09A"/><stop offset="1" stop-color="#EACB72"/></linearGradient></defs>
<path d="M17 18.5 L20.5 21.5 L17.5 23 Z" fill="#B0B8CC" opacity=".55"/>
<path d="M2 0.5 L17 2.5 L17.5 21.5 L7 22.5 Z" fill="#DDB550"/>
<path d="M7 2 L13 3 L13 22.5 L7.5 22.5 Z" fill="#FFFFFF"/>
<path d="M8.3 5 L11 5.3 L11 20.5 L8.3 20.3 Z" fill="#B4B6C0" opacity=".55"/>
<path d="M13 2.8 L17 2.5 L17.5 21.5 L13 22.3 Z" fill="#E8C466"/>
<path d="M15.2 13.5 L17.8 13.8 L17.8 21 L15.2 21.8 Z" fill="#F4DC96"/>
<path d="M1 0.3 L7 3.8 L7.5 23 L1 20.3 Z" fill="url(#fy8)"/>
<path d="M7 3.8 L7.5 23" stroke="#D8AE48" stroke-width=".6"/>
</svg>
<div class="a" id="n8" style="left:45.79px;top:332.00px;line-height:14px;font-size:9.8px;letter-spacing:0.0px;color:#101010;white-space:nowrap;transform:scaleX(0.9444);transform-origin:0 0;">toys</div>
<div class="a" id="d8" style="left:172.83px;top:332.00px;line-height:14px;font-size:9.8px;letter-spacing:0.0px;color:#101010;white-space:nowrap;transform:scaleX(0.8824);transform-origin:0 0;">schematics that I might consider playing with at some point</div>
<div class="a" id="u8" style="left:493.16px;top:332.00px;line-height:14px;font-size:9.8px;letter-spacing:0.0px;color:#101010;white-space:nowrap;transform:scaleX(0.8571);transform-origin:0 0;">75.33 MB</div>
<div class="a" id="p8" style="left:573.46px;top:332.00px;line-height:14px;font-size:9.8px;letter-spacing:0.0px;color:#101010;white-space:nowrap;transform:scaleX(0.8421);transform-origin:0 0;">Disabled</div>
<svg class="a" style="left:673px;top:333px" width="10" height="10" viewBox="0 0 10 10">
<defs><radialGradient id="gd333" cx=".55" cy=".45" r=".6"><stop offset="0" stop-color="#F4FAB0"/><stop offset=".5" stop-color="#BCDC48"/><stop offset="1" stop-color="#7CAA22"/></radialGradient></defs>
<circle cx="5" cy="5" r="4.6" fill="#5E8E18"/><circle cx="5" cy="5" r="3.5" fill="url(#gd333)"/></svg>
<div class="a" id="h8" style="left:694.79px;top:332.00px;line-height:14px;font-size:9.8px;letter-spacing:0.0px;color:#101010;white-space:nowrap;transform:scaleX(0.8857);transform-origin:0 0;">Healthy</div>
<svg class="a" style="left:17px;top:353px" width="24" height="26" viewBox="0 0 24 26"><defs><linearGradient id="sb9" x1="0" y1="0" x2="0" y2="1"><stop offset="0" stop-color="#7E98BC"/><stop offset="1" stop-color="#5C7CA4"/></linearGradient>
<linearGradient id="sf9" x1="0" y1="0" x2="0" y2="1"><stop offset="0" stop-color="#6E8EBC"/><stop offset=".6" stop-color="#6AA8A8"/><stop offset="1" stop-color="#58B078"/></linearGradient></defs>
<path d="M1.5 0 L16 1.5 L16 24 L6 24.5 Z" fill="url(#sb9)"/>
<path d="M0.8 0 L5.5 3 L5.5 25 L0.8 22 Z" fill="url(#sf9)"/><path d="M8 6 L21.8 7.3 L21.8 25 L8 24.3 Z" fill="#1E2636"/><path d="M9.3 7.5 L19.3 8.4 L19.3 23.6 L9.3 23 Z" fill="#2C8CE4"/>
<path d="M10 12 L13 11 L13.5 15 L10.5 16 Z" fill="#E04020"/><path d="M14.5 10 L18 11 L17 16 L14.5 15 Z" fill="#C05820"/><path d="M12 18 L16 17 L17 21 L12.5 21.5 Z" fill="#D05028"/>
<g fill="#C8D0E0"><rect x="20.2" y="9" width="1" height="1.2"/><rect x="20.2" y="12" width="1" height="1.2"/><rect x="20.2" y="15" width="1" height="1.2"/><rect x="20.2" y="18" width="1" height="1.2"/><rect x="20.2" y="21" width="1" height="1.2"/></g></svg>
<div class="a" id="n9" style="left:45.75px;top:358.00px;line-height:14px;font-size:9.8px;letter-spacing:0.0px;color:#101010;white-space:nowrap;transform:scaleX(0.8170);transform-origin:0 0;">Videos</div>
<div class="a" id="d9" style="left:172.83px;top:358.00px;line-height:14px;font-size:9.8px;letter-spacing:0.0px;color:#101010;white-space:nowrap;transform:scaleX(0.8942);transform-origin:0 0;">Shared folder for videos</div>
<div class="a" id="u9" style="left:493.15px;top:358.00px;line-height:14px;font-size:9.8px;letter-spacing:0.0px;color:#101010;white-space:nowrap;transform:scaleX(0.8516);transform-origin:0 0;">8.52 MB</div>
<div class="a" id="p9" style="left:573.46px;top:358.00px;line-height:14px;font-size:9.8px;letter-spacing:0.0px;color:#101010;white-space:nowrap;transform:scaleX(0.8421);transform-origin:0 0;">Disabled</div>
<svg class="a" style="left:673px;top:360px" width="10" height="10" viewBox="0 0 10 10">
<defs><radialGradient id="gd360" cx=".55" cy=".45" r=".6"><stop offset="0" stop-color="#F4FAB0"/><stop offset=".5" stop-color="#BCDC48"/><stop offset="1" stop-color="#7CAA22"/></radialGradient></defs>
<circle cx="5" cy="5" r="4.6" fill="#5E8E18"/><circle cx="5" cy="5" r="3.5" fill="url(#gd360)"/></svg>
<div class="a" id="h9" style="left:694.79px;top:358.00px;line-height:14px;font-size:9.8px;letter-spacing:0.0px;color:#101010;white-space:nowrap;transform:scaleX(0.8857);transform-origin:0 0;">Healthy</div>
</body></html>
